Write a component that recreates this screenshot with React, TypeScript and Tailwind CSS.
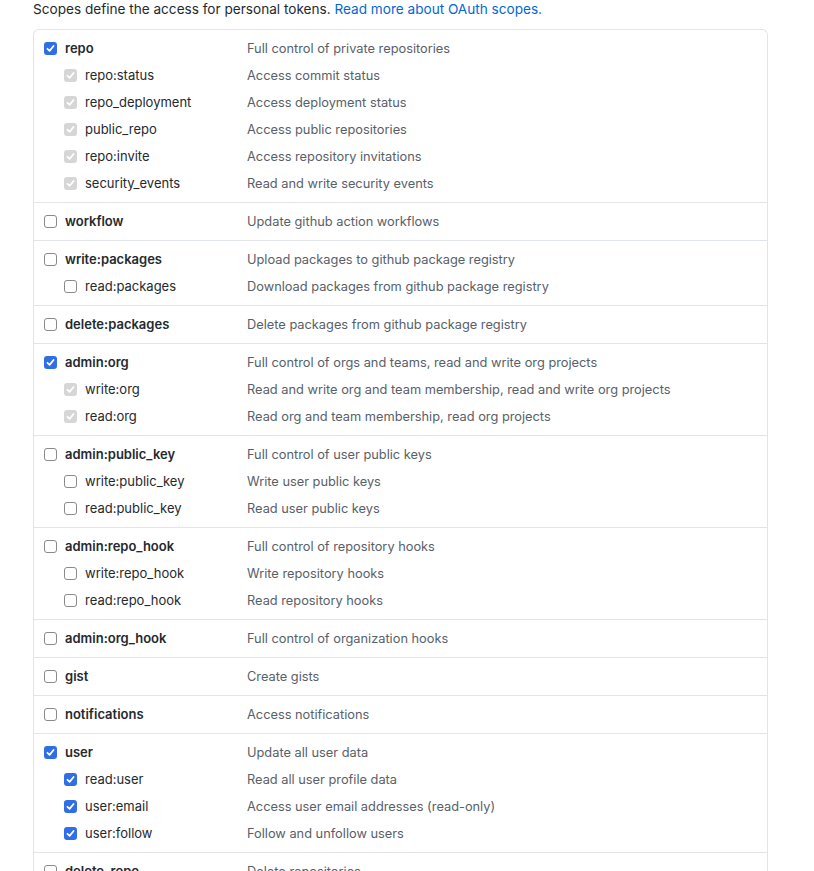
import React from "react";

type Item = { name: string; desc: string; state: "on" | "off" | "dis" };
type Group = { main: Item; subs: Item[] };

const groups: Group[] = [
  {
    main: { name: "repo", desc: "Full control of private repositories", state: "on" },
    subs: [
      { name: "repo:status", desc: "Access commit status", state: "dis" },
      { name: "repo_deployment", desc: "Access deployment status", state: "dis" },
      { name: "public_repo", desc: "Access public repositories", state: "dis" },
      { name: "repo:invite", desc: "Access repository invitations", state: "dis" },
      { name: "security_events", desc: "Read and write security events", state: "dis" },
    ],
  },
  { main: { name: "workflow", desc: "Update github action workflows", state: "off" }, subs: [] },
  {
    main: { name: "write:packages", desc: "Upload packages to github package registry", state: "off" },
    subs: [{ name: "read:packages", desc: "Download packages from github package registry", state: "off" }],
  },
  { main: { name: "delete:packages", desc: "Delete packages from github package registry", state: "off" }, subs: [] },
  {
    main: { name: "admin:org", desc: "Full control of orgs and teams, read and write org projects", state: "on" },
    subs: [
      { name: "write:org", desc: "Read and write org and team membership, read and write org projects", state: "dis" },
      { name: "read:org", desc: "Read org and team membership, read org projects", state: "dis" },
    ],
  },
  {
    main: { name: "admin:public_key", desc: "Full control of user public keys", state: "off" },
    subs: [
      { name: "write:public_key", desc: "Write user public keys", state: "off" },
      { name: "read:public_key", desc: "Read user public keys", state: "off" },
    ],
  },
  {
    main: { name: "admin:repo_hook", desc: "Full control of repository hooks", state: "off" },
    subs: [
      { name: "write:repo_hook", desc: "Write repository hooks", state: "off" },
      { name: "read:repo_hook", desc: "Read repository hooks", state: "off" },
    ],
  },
  { main: { name: "admin:org_hook", desc: "Full control of organization hooks", state: "off" }, subs: [] },
  { main: { name: "gist", desc: "Create gists", state: "off" }, subs: [] },
  { main: { name: "notifications", desc: "Access notifications", state: "off" }, subs: [] },
  {
    main: { name: "user", desc: "Update all user data", state: "on" },
    subs: [
      { name: "read:user", desc: "Read all user profile data", state: "on" },
      { name: "user:email", desc: "Access user email addresses (read-only)", state: "on" },
      { name: "user:follow", desc: "Follow and unfollow users", state: "on" },
    ],
  },
  { main: { name: "delete_repo", desc: "Delete repositories", state: "off" }, subs: [] },
];

function Box({ state }: { state: Item["state"] }) {
  if (state === "off") {
    return <span className="block w-[13px] h-[13px] shrink-0 rounded-[3px] border border-[#8a8a8a] bg-white" />;
  }
  const bg = state === "on" ? "bg-[#2f6ee5]" : "bg-[#d6d6d6]";
  return (
    <span className={`flex items-center justify-center w-[13px] h-[13px] shrink-0 rounded-[3px] ${bg}`}>
      <svg width="9" height="9" viewBox="0 0 10 10" fill="none">
        <path d="M1.6 5.3 L4 7.6 L8.4 2.2" stroke="white" strokeWidth="1.9" strokeLinecap="round" strokeLinejoin="round" />
      </svg>
    </span>
  );
}

function Line({ item, main }: { item: Item; main: boolean }) {
  return (
    <div className="flex h-[27px] items-center">
      <div className={`flex w-[203px] items-center gap-2 ${main ? "" : "pl-5"}`}>
        <Box state={item.state} />
        <span className={main ? "font-semibold text-[#24292e]" : "text-[#24292e]"}>{item.name}</span>
      </div>
      <span className="text-[12.8px] text-[#586069]">{item.desc}</span>
    </div>
  );
}

export default function App() {
  return (
    <div className="bg-white min-h-screen pl-[33px] text-[13px]" style={{ fontFamily: "Inter, 'Noto Sans', sans-serif" }}>
      <p className="leading-[20px] mb-[10px] text-[13.6px] text-[#24292e] -mt-[1px]">
        Scopes define the access for personal tokens.{" "}
        <a className="text-[#0366d6]">Read more about OAuth scopes.</a>
      </p>
      <div className="w-[735px] rounded-t-md border border-[#e1e4e8] border-b-0">
        {groups.map((g, i) => (
          <div key={g.main.name} className={`px-[10px] py-[5px] ${i > 0 ? "border-t border-[#e1e4e8]" : ""}`}>
            <Line item={g.main} main />
            {g.subs.map((s) => (
              <Line key={s.name} item={s} main={false} />
            ))}
          </div>
        ))}
      </div>
    </div>
  );
}
